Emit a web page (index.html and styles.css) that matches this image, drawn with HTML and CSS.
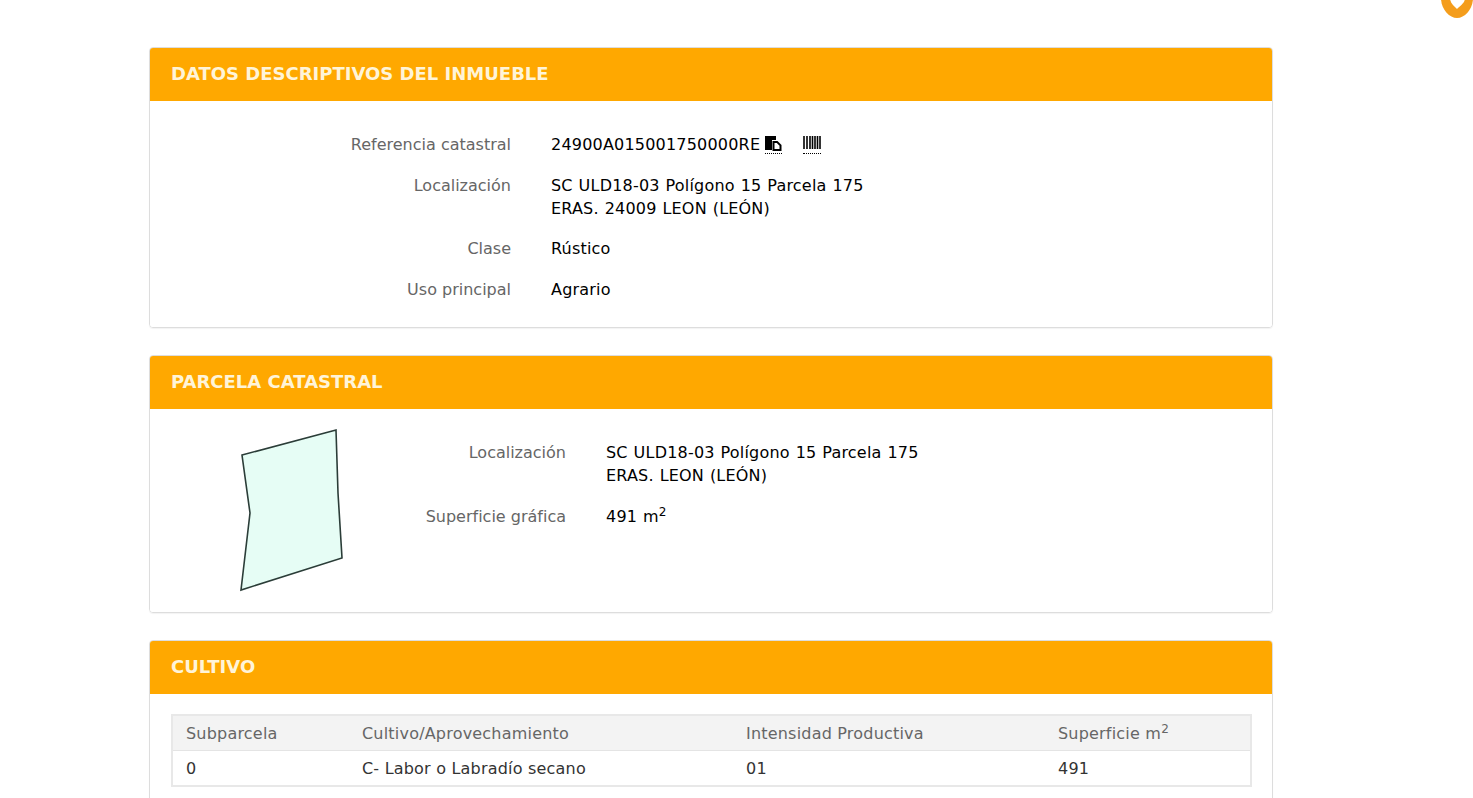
FILE: index.html
```html
<!DOCTYPE html>
<html lang="es">
<head>
    <meta charset="UTF-8">
    <title>Datos descriptivos del inmueble</title>
    <link rel="stylesheet" href="styles.css">
</head>
<body>

    <!-- marca de la esquina -->
    <svg class="corner-mark" width="36" height="20" viewBox="0 0 36 20">
        <path d="M1 -2 C1 9 9 18 17 18 C25 18 33 9 33 -2 Z" fill="#f49d1c"/>
        <path d="M10 -2 C10 3 14 6 17 9 C20 6 25 3 25 -2 Z" fill="#fff"/>
    </svg>

    <div class="panel">
        <div class="panel-title">DATOS DESCRIPTIVOS DEL INMUEBLE</div>
        <div class="panel-body data-body">
            <div class="row">
                <div class="label">Referencia catastral</div>
                <div class="value">
                    24900A015001750000RE<a class="icon-link copy-link" href="#">
                        <svg width="17" height="17" viewBox="0 0 17 17">
                            <path d="M0 0H11V4H7V14H0Z" fill="#000"/>
                            <path d="M7.500 5H12.500L16.500 9V15H7.500Z" fill="#000"/>
                            <path d="M9.500 7H11.800L14.500 9.700V13H9.500Z" fill="#fff"/>
                        </svg>
                    </a><a class="icon-link barcode-link" href="#">
                        <svg width="18" height="17" viewBox="0 0 18 17">
                            <path d="M1 0V13M4 0V13M7 0V13M9.500 0V13M12 0V13M14.500 0V13M17 0V13" stroke="#000" stroke-width="1.6"/>
                        </svg>
                    </a>
                </div>
            </div>
            <div class="row row-tight">
                <div class="label">Localización</div>
                <div class="value">SC ULD18-03 Polígono 15 Parcela 175<br>ERAS. 24009 LEON (LEÓN)</div>
            </div>
            <div class="row">
                <div class="label">Clase</div>
                <div class="value">Rústico</div>
            </div>
            <div class="row">
                <div class="label">Uso principal</div>
                <div class="value">Agrario</div>
            </div>
        </div>
    </div>

    <div class="panel">
        <div class="panel-title">PARCELA CATASTRAL</div>
        <div class="panel-body parcel-body">
            <svg class="parcel-shape" width="104" height="164" viewBox="0 0 104 164">
                <path d="M1 26 L95 1 L97 64 L101 129 L0 161 L9 84 Z" fill="#e6fdf5" stroke="#2b3d38" stroke-width="1.6"/>
            </svg>
            <div class="parcel-data">
                <div class="row">
                    <div class="label">Localización</div>
                    <div class="value">SC ULD18-03 Polígono 15 Parcela 175<br>ERAS. LEON (LEÓN)</div>
                </div>
                <div class="row">
                    <div class="label">Superficie gráfica</div>
                    <div class="value">491 m<sup>2</sup></div>
                </div>
            </div>
        </div>
    </div>

    <div class="panel">
        <div class="panel-title">CULTIVO</div>
        <div class="panel-body table-body">
            <table class="crop-table">
                <tr>
                    <th class="col-sub">Subparcela</th>
                    <th class="col-crop">Cultivo/Aprovechamiento</th>
                    <th class="col-int">Intensidad Productiva</th>
                    <th>Superficie m<sup>2</sup></th>
                </tr>
                <tr>
                    <td>0</td>
                    <td>C- Labor o Labradío secano</td>
                    <td>01</td>
                    <td>491</td>
                </tr>
            </table>
        </div>
    </div>

</body>
</html>
```

FILE: styles.css
```css
html, body {
    height: 798px;
    overflow: hidden;
}

body {
    margin: 0;
    padding-top: 47px;
    box-sizing: border-box;
    font-family: "DejaVu Sans", Verdana, sans-serif;
    font-size: 16px;
    color: #000;
    background: #fff;
}

.corner-mark {
    position: absolute;
    top: 0;
    left: 1440px;
}

.panel {
    width: 1122px;
    margin: 0 0 27px 149px;
    border: 1px solid #dddddd;
    border-radius: 4px;
    box-shadow: 0 1px 1px rgba(0, 0, 0, 0.05);
    overflow: hidden;
}

.panel-title {
    height: 53px;
    line-height: 52px;
    padding-left: 21px;
    background: #ffa800;
    color: #fff4d8;
    font-size: 18px;
    font-weight: 700;
}

.panel-body {
    background: #fff;
}

/* filas etiqueta / valor */
.row {
    display: flex;
    line-height: 23px;
    margin-bottom: 18px;
}

.row-tight {
    margin-bottom: 17px;
}

.row:last-child {
    margin-bottom: 0;
}

.label {
    text-align: right;
    color: #666;
}

.value {
    margin-left: 40px;
    letter-spacing: 0.2px;
    word-spacing: 0.6px;
}

.data-body {
    height: 226px;
    box-sizing: border-box;
    padding-top: 32px;
}

.data-body .label {
    width: 361px;
}

.parcel-body {
    display: flex;
    height: 203px;
    box-sizing: border-box;
    padding: 20px 0 0 91px;
}

.parcel-data {
    padding-top: 12px;
}

.parcel-data .label {
    width: 221px;
    margin-left: 0;
}

.parcel-shape {
    flex: none;
    overflow: visible;
}

sup {
    font-size: 12px;
    line-height: 0;
}

.icon-link {
    display: inline-block;
    vertical-align: -3px;
    height: 17px;
    border-bottom: 1px dotted #000;
    line-height: 0;
}

.copy-link {
    margin-left: 5px;
}

.barcode-link {
    margin-left: 21px;
}

/* tabla de cultivo */
.table-body {
    padding: 20px 20px 20px 21px;
}

.crop-table {
    width: 1081px;
    border-collapse: collapse;
    border: 2px solid #e8e8e8;
    table-layout: fixed;
}

.crop-table th,
.crop-table td {
    padding: 0 0 0 13px;
    text-align: left;
    font-weight: 400;
    color: #333;
    letter-spacing: 0.2px;
}

.crop-table th {
    height: 34px;
    background: #f3f3f3;
    color: #666;
    border-bottom: 1px solid #e4e4e4;
}

.crop-table td {
    height: 34px;
}

.col-sub {
    width: 163px;
}

.col-crop {
    width: 371px;
}

.col-int {
    width: 299px;
}
```
